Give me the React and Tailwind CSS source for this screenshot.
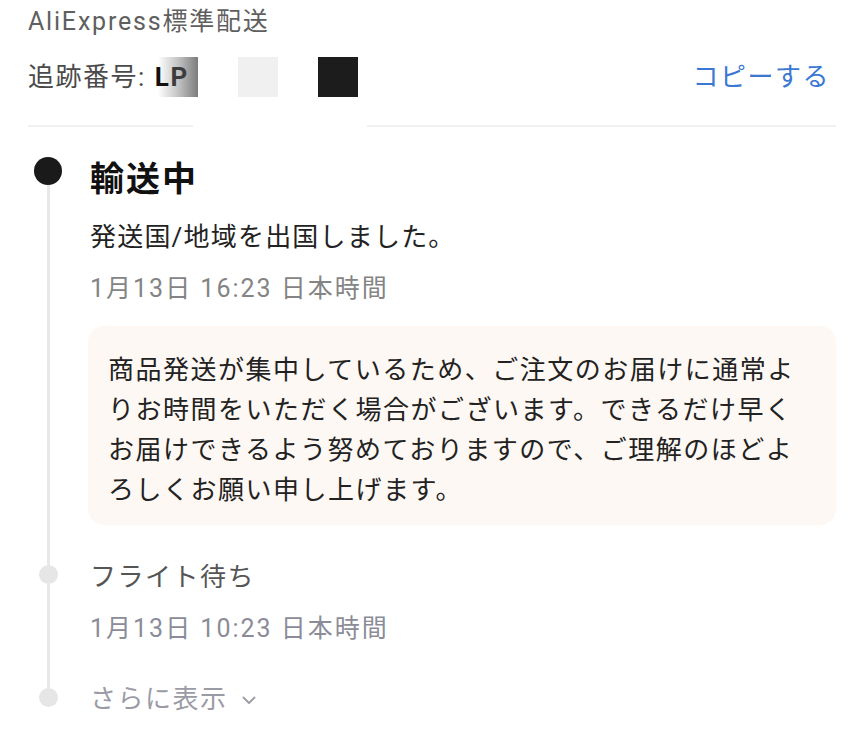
import React from "react";

const FONT = { fontFamily: 'Roboto, "Noto Sans CJK JP", sans-serif' };

const Chevron = () => (
  <svg width="14" height="9" viewBox="0 0 14 9" className="ml-[14px] mt-[2px]">
    <polyline points="1.5,1.5 7,7 12.5,1.5" fill="none" stroke="#9c9ca6" strokeWidth="1.8" strokeLinecap="round" strokeLinejoin="round" />
  </svg>
);

const App = () => {
  return (
    <div className="w-[864px] h-[736px] bg-white overflow-hidden" style={FONT}>
      {/* HEADER */}
      <div className="px-[28px] pt-[6px]">
        <div className="text-[25px] leading-[32px] tracking-[1.8px] text-[#5f5f5f]">
          AliExpress標準配送
        </div>

        <div className="flex items-center justify-between mt-[19px] h-[40px]">
          <div className="flex items-center text-[26px] leading-[36px] tracking-[1.5px] text-[#4a4a4a]">
            <span>追跡番号:</span>
            <span className="ml-[12px] w-[40px] h-[40px] flex items-center bg-gradient-to-r from-white via-[#c4c4c4] to-[#7c7c7c] font-bold text-[#111]">
              <span className="-ml-[3px]">L</span>
              <span className="text-[#3c3c3c]">P</span>
            </span>
            <span className="ml-[40px] w-[40px] h-[40px] bg-[#f0f0f0]" />
            <span className="ml-[40px] w-[40px] h-[40px] bg-[#1c1c1c]" />
          </div>
          <button className="mr-[6px] text-[26px] leading-[36px] tracking-[1.5px] text-[#3b78d4]">
            コピーする
          </button>
        </div>

        <div className="flex mt-[28px] h-[2px]">
          <div className="w-[165px] bg-[#f1f1f1]" />
          <div className="w-[174px]" />
          <div className="flex-1 bg-[#f1f1f1]" />
        </div>
      </div>

      {/* TIMELINE */}
      <div className="px-[28px] pt-[30px]">
        {/* current */}
        <div className="flex">
          <div className="w-[40px] flex flex-col items-center shrink-0">
            <div className="w-[28px] h-[28px] rounded-full bg-[#1a1a1a]" />
            <div className="flex-1 w-[3px] bg-[#e8e8e8]" />
          </div>
          <div className="flex-1 ml-[22px] pb-[32px]">
            <div className="text-[34px] leading-[44px] tracking-[2px] font-bold text-[#111]">
              輸送中
            </div>
            <div className="mt-[16px] text-[26px] leading-[40px] tracking-[1.2px] text-[#222]">
              発送国/地域を出国しました。
            </div>
            <div className="mt-[14px] text-[25px] leading-[36px] tracking-[2px] text-[#848484]">
              1月13日 16:23 日本時間
            </div>
            <div className="mt-[19px] -ml-[2px] rounded-[16px] bg-[#fdf8f4] pl-[20px] pr-[20px] pt-[24px] pb-[15px] text-[26px] leading-[40px] tracking-[1.5px] text-[#222]">
              商品発送が集中しているため、ご注文のお届けに通常よりお時間をいただく場合がございます。できるだけ早くお届けできるよう努めておりますので、ご理解のほどよろしくお願い申し上げます。
            </div>
          </div>
        </div>

        {/* previous */}
        <div className="flex">
          <div className="w-[40px] flex flex-col items-center shrink-0">
            <div className="h-[8px] w-[3px] bg-[#e8e8e8]" />
            <div className="w-[19px] h-[19px] rounded-full bg-[#e6e6e6]" />
            <div className="flex-1 w-[3px] bg-[#e8e8e8]" />
          </div>
          <div className="flex-1 ml-[22px] pb-[32px]">
            <div className="text-[26px] leading-[40px] tracking-[1.5px] text-[#555]">
              フライト待ち
            </div>
            <div className="mt-[14px] text-[25px] leading-[36px] tracking-[2px] text-[#8b8c97]">
              1月13日 10:23 日本時間
            </div>
          </div>
        </div>

        {/* more */}
        <div className="flex">
          <div className="w-[40px] flex flex-col items-center shrink-0">
            <div className="h-[9px] w-[3px] bg-[#e8e8e8]" />
            <div className="w-[19px] h-[19px] rounded-full bg-[#e6e6e6]" />
          </div>
          <div className="flex-1 ml-[22px] flex items-center h-[40px] text-[26px] leading-[40px] tracking-[1.5px] text-[#9b9ba5]">
            <span>さらに表示</span>
            <Chevron />
          </div>
        </div>
      </div>
    </div>
  );
};

export default App;
